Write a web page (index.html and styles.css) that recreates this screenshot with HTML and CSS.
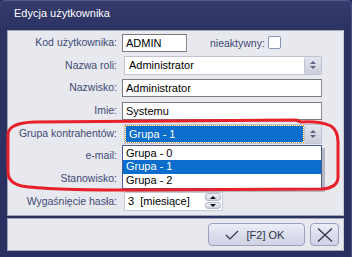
FILE: index.html
```html
<!DOCTYPE html>
<html lang="pl">
<head>
<meta charset="utf-8">
<title>Edycja użytkownika</title>
<link rel="stylesheet" href="styles.css">
</head>
<body>
<div class="window">
  <div class="titlebar">Edycja użytkownika</div>
  <div class="panel">
    <div class="form">
      <div class="label">Kod użytkownika:</div>
      <div class="ctrl row1">
        <div class="input short">ADMIN</div>
        <span class="inline-label">nieaktywny:</span>
        <span class="checkbox"></span>
      </div>

      <div class="label">Nazwa roli:</div>
      <div class="ctrl">
        <div class="select"><span class="value">Administrator</span><span class="spin"><i class="up"></i><i class="down"></i></span></div>
      </div>

      <div class="label">Nazwisko:</div>
      <div class="ctrl"><div class="input">Administrator</div></div>

      <div class="label">Imie:</div>
      <div class="ctrl"><div class="input">Systemu</div></div>

      <div class="label">Grupa kontrahentów:</div>
      <div class="ctrl dropwrap">
        <div class="select focus"><span class="value">Grupa - 1</span><span class="spin"><i class="up"></i><i class="down"></i></span></div>
        <ul class="droplist">
          <li>Grupa - 0</li>
          <li class="sel">Grupa - 1</li>
          <li>Grupa - 2</li>
        </ul>
      </div>

      <div class="label">e-mail:</div>
      <div class="ctrl"><div class="input"></div></div>

      <div class="label">Stanowisko:</div>
      <div class="ctrl"><div class="input"></div></div>

      <div class="label">Wygaśnięcie hasła:</div>
      <div class="ctrl">
        <div class="spinner"><span class="value">3&nbsp; [miesiące]</span>
          <span class="spinbtns"><span class="sbtn"><i class="up"></i></span><span class="sbtn"><i class="down"></i></span></span>
        </div>
      </div>
    </div>
  </div>
  <div class="footer">
    <button class="btn ok"><svg class="check" width="14" height="10" viewBox="0 0 14 10"><path d="M1 5 L5 9 L13 1" fill="none" stroke="#30344a" stroke-width="1.2"/></svg><span>[F2] OK</span></button>
    <button class="btn close"><svg width="16" height="14" viewBox="0 0 16 14"><path d="M1 0.5 L15 13.5 M15 0.5 L1 13.5" stroke="#30344a" stroke-width="1.3" fill="none"/></svg></button>
  </div>
  <svg class="annotation" width="352" height="257" viewBox="0 0 352 257">
    <path d="M34 122 L296 120 L301 122 Q320 121 331 126 Q338 131 338 142 L338 178 Q337 188 322 189 L130 190 Q45 190 22 186 Q8 183 8 172 L8 134 Q9 123 34 122 Z" fill="none" stroke="#e8202a" stroke-width="3"/>
  </svg>
</div>
</body>
</html>
```
FILE: styles.css
```css
* { box-sizing: border-box; }
html, body { margin: 0; padding: 0; }
body {
  width: 352px;
  height: 257px;
  background: #2a3060;
  font-family: Tahoma, "Liberation Sans", Arial, sans-serif;
  font-size: 10.5px;
  overflow: hidden;
}
.window {
  position: relative;
  width: 352px;
  height: 257px;
  background: linear-gradient(#363d6e, #2c3262 30px, #2a3060);
  border-radius: 6px 6px 0 0;
  box-shadow: inset -1px 0 0 #4a5184, inset 0 1px 0 #555c8c;
  display: flex;
  flex-direction: column;
}
.titlebar {
  height: 30px;
  padding: 7px 0 0 14px;
  color: #fff;
  font-size: 11px;
  line-height: 13px;
}
.panel {
  margin: 0 8px 0 7px;
  height: 186px;
  background: #e7e9ef;
  border: 1px solid #9fa4b6;
  border-right-color: #c7cad6;
  padding-top: 2px;
}
.form {
  display: grid;
  grid-template-columns: 109px 200px;
  column-gap: 5px;
  grid-auto-rows: 19px;
  row-gap: 3.7px;
}
.label {
  text-align: right;
  color: #414a74;
  line-height: 19px;
  white-space: nowrap;
}
.ctrl { position: relative; display: flex; align-items: center; }
.input {
  width: 200px;
  height: 18px;
  background: #fff;
  border: 1px solid #7a7a7a;
  border-right-color: #8c8c8c;
  padding: 0 3px;
  line-height: 16px;
  color: #000;
  font-size: 11px;
}
.input.short { width: 65px; }
.inline-label {
  margin-left: 23px;
  color: #414a74;
}
.checkbox {
  margin-left: 3px;
  width: 13px;
  height: 13px;
  background: #fff;
  border: 1px solid #8a94b4;
  border-radius: 2px;
}
.select {
  margin-left: 2px;
  width: 198px;
  height: 19px;
  background: #fff;
  border: 1px solid #c0c4d2;
  display: flex;
  align-items: stretch;
  font-size: 11px;
}
.select .value {
  flex: 1;
  padding: 0 4px;
  line-height: 17px;
  color: #000;
}
.select.focus { height: 20px; margin-top: 1px; }
.select.focus .value {
  margin: 1px 1px 1px 1px;
  background: #0b6dcc;
  color: #fff;
  outline: 1px dotted #e39a2a;
  line-height: 16px;
  padding-left: 3px;
}
.spin {
  width: 17px;
  background: linear-gradient(#e4e6ee, #c9cdda);
  border-left: 1px solid #c0c4d2;
  border-radius: 2px;
  display: flex;
  flex-direction: column;
  align-items: center;
  justify-content: center;
  gap: 2px;
}
.up, .down {
  display: block;
  width: 0;
  height: 0;
  border-left: 3px solid transparent;
  border-right: 3px solid transparent;
}
.up { border-bottom: 3px solid #5b6385; }
.down { border-top: 3px solid #5b6385; }
.droplist {
  position: absolute;
  left: 0;
  top: 21px;
  width: 200px;
  margin: 0;
  padding: 1px 0;
  list-style: none;
  background: #fff;
  border: 1px solid #4c5894;
  box-shadow: 3px 3px 0 rgba(90, 95, 110, 0.35);
  z-index: 5;
  font-size: 11px;
}
.droplist li {
  height: 13.5px;
  line-height: 13.5px;
  padding-left: 3px;
  color: #000;
}
.droplist li.sel { background: #0b6dcc; color: #fff; }
.spinner {
  margin-left: 2px;
  width: 99px;
  height: 19px;
  background: #fff;
  border: 1px solid #c6cad6;
  display: flex;
  align-items: center;
  font-size: 11px;
}
.spinner .value { flex: 1; padding-left: 3px; color: #000; }
.spinbtns {
  width: 17px;
  display: flex;
  flex-direction: column;
  gap: 1px;
  padding-right: 1px;
}
.sbtn {
  height: 7.5px;
  background: linear-gradient(#eef0f6, #cfd3e0);
  border: 1px solid #b3b8ca;
  border-radius: 3px;
  display: flex;
  align-items: center;
  justify-content: center;
}
.sbtn .up { border-bottom-color: #111; }
.sbtn .down { border-top-color: #111; }
.footer {
  margin: 2px 8px 0 7px;
  height: 33px;
  background: #e7e9ef;
  border: 1px solid #9fa4b6;
  border-right-color: #c7cad6;
  display: flex;
  justify-content: flex-end;
  align-items: center;
  gap: 5px;
  padding-right: 4px;
}
.btn {
  height: 23px;
  border: 1px solid #9aa0bd;
  border-radius: 4px;
  background: linear-gradient(#eceef6, #d7dbea 60%, #cfd3e4);
  font-family: Tahoma, "Liberation Sans", Arial, sans-serif;
  font-size: 11px;
  color: #30344a;
  display: flex;
  align-items: center;
  justify-content: center;
  padding: 0;
}
.btn.ok { width: 97px; gap: 8px; }
.btn.ok .check { margin-left: -4px; }
.btn.close { width: 29px; }
.annotation {
  position: absolute;
  left: 0;
  top: 0;
  pointer-events: none;
  z-index: 10;
}
```
